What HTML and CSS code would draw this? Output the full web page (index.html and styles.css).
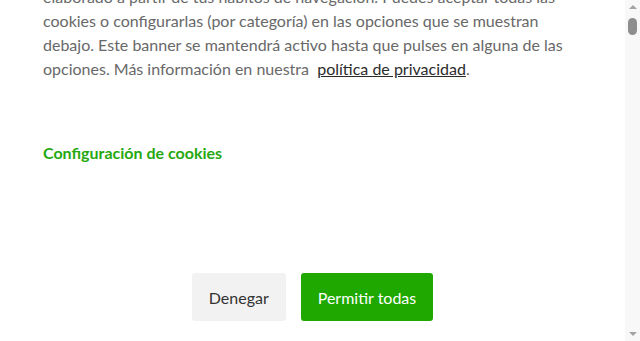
FILE: index.html
```html
<!DOCTYPE html>
<html lang="es">
<head>
    <meta charset="UTF-8">
    <meta name="viewport" content="width=device-width, initial-scale=1.0">
    <title>Cookies</title>
    <link rel="stylesheet" href="styles.css">
</head>
<body>

<div class="cookie-banner">
    <p class="cookie-text">
        Utilizamos cookies propias y de terceros para fines analíticos y para mostrarte publicidad personalizada en base a un perfil<br>
        elaborado a partir de tus hábitos de navegación. Puedes aceptar todas las cookies o configurarlas (por categoría) en las opciones que se muestran debajo. Este banner se mantendrá activo hasta que pulses en alguna de las opciones. Más información en nuestra&nbsp; <a href="#" class="cookie-link">política de privacidad</a>.
    </p>

    <a href="#" class="cookie-config">Configuración de cookies</a>

    <div class="cookie-actions">
        <button class="btn btn-deny">Denegar</button>
        <button class="btn btn-allow">Permitir todas</button>
    </div>
</div>

<div class="page-rest"></div>

<!-- barra de desplazamiento -->
<div class="scrollbar">
    <span class="scroll-up"></span>
    <span class="scroll-thumb"></span>
    <span class="scroll-down"></span>
</div>

<script>
    // abrir la página un poco desplazada
    window.scrollTo(0, 81);
</script>

</body>
</html>
```

FILE: styles.css
```css
body {
    margin: 0 15px 0 0;
    padding: 0;
    background: #fff;
    font-family: Lato, "Open Sans", sans-serif;
}

.cookie-banner {
    padding: 18px 43px 0 43px;
}

.cookie-text {
    margin: 0;
    width: 539px;
    font-size: 16px;
    line-height: 24px;
    color: #686868;
}

.cookie-link {
    color: #2b2b2b;
    text-decoration: underline;
}

.cookie-config {
    display: block;
    margin-top: 62px;
    font-size: 16px;
    line-height: 20px;
    font-weight: bold;
    color: #26a80f;
    text-decoration: none;
}

.cookie-actions {
    display: flex;
    justify-content: center;
    gap: 15px;
    margin: 110px -43px 0 -43px;
}

.btn {
    height: 48px;
    padding: 0 17px;
    border: none;
    border-radius: 3px;
    font-family: Lato, "Open Sans", sans-serif;
    font-size: 16px;
    cursor: pointer;
}

.btn-deny {
    background-color: #f2f2f2;
    color: #333;
}

.btn-allow {
    background-color: #1fa800;
    color: #fff;
}

.page-rest {
    height: 6300px;
}

.scrollbar {
    position: fixed;
    top: 0;
    right: 0;
    width: 15px;
    height: 100%;
    background-color: #f8f8f8;
}

.scroll-up, .scroll-down {
    position: absolute;
    left: 4px;
    width: 0;
    height: 0;
    border-left: 4px solid transparent;
    border-right: 4px solid transparent;
}

.scroll-up {
    top: 5px;
    border-bottom: 4px solid #a3a3a3;
}

.scroll-down {
    bottom: 5px;
    border-top: 4px solid #a3a3a3;
}

.scroll-thumb {
    position: absolute;
    top: 18px;
    left: 3px;
    width: 9px;
    height: 17px;
    border-radius: 5px;
    background-color: #8e8e8e;
}
```
